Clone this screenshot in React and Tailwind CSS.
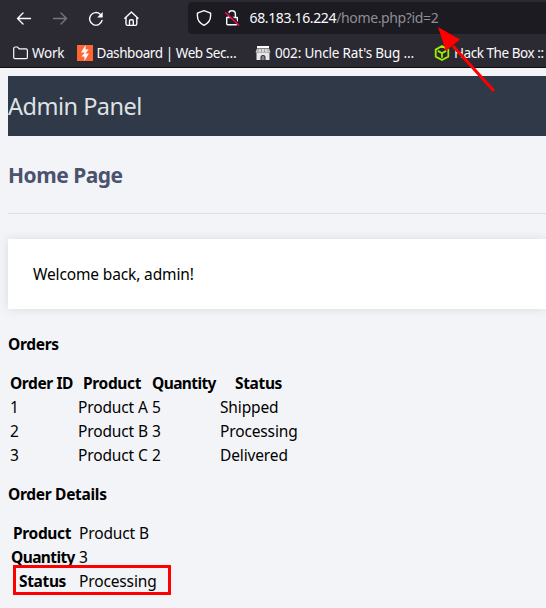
import React from "react";

const orders = [
  ["1", "Product A", "5", "Shipped"],
  ["2", "Product B", "3", "Processing"],
  ["3", "Product C", "2", "Delivered"],
];

function Toolbar() {
  return (
    <div className="flex h-[38px] items-start">
      <svg className="h-[38px] w-[188px] shrink-0" viewBox="0 0 188 38" fill="none" strokeWidth="1.4" strokeLinecap="round" strokeLinejoin="round">
        <path d="M30.5 18.5H17.5M23 13l-5.5 5.5L23 24" stroke="#fbfbfe" />
        <path d="M53.5 18.5h13M61 13l5.5 5.5L61 24" stroke="#77767e" />
        <path d="M100.2 14.2A6.3 6.3 0 1 0 102 20.5" stroke="#fbfbfe" />
        <path d="M102.7 12v5.6h-5.6z" fill="#fbfbfe" />
        <path d="M124.8 18.2l6.6-6.3 6.6 6.3M126 17.5v6.3q0 1.6 1.6 1.6h7.6q1.6 0 1.6-1.6v-6.3M129.5 25v-4q0-1.2 1.2-1.2h1.4q1.2 0 1.2 1.2v4" stroke="#fbfbfe" />
      </svg>
      <div className="mt-[2px] flex h-8 flex-1 items-center rounded-l bg-[#1c1b22]">
        <svg className="h-8 w-[61.5px] shrink-0" viewBox="0 0 61.5 32" fill="none" stroke="#fbfbfe" strokeWidth="1.4" strokeLinecap="round" strokeLinejoin="round">
          <path d="M16 8.7l6.6 2.4v2.6c0 4.4-2.6 7.6-6.6 9.6-4-2-6.6-5.2-6.6-9.6v-2.6z" />
          <path d="M40.6 14.5v-2.3a3.4 3.4 0 0 1 6.8 0v2.3M38.7 15.5h10.6v6.3q0 1-1 1h-8.6q-1 0-1-1z" />
          <path d="M38.7 9.9l13 12.6" stroke="#1c1b22" strokeWidth="1.5" />
          <path d="M37.6 10.7l13 12.4" stroke="#e20b42" strokeWidth="1.6" />
        </svg>
        <span className="whitespace-pre text-[14px] leading-8 tracking-[-0.36px] text-[#fbfbfe]">68.183.16.224<span className="text-[#8f8e95]">/home.php?id=2</span></span>
      </div>
    </div>
  );
}

function Bookmarks() {
  return (
    <div className="flex h-[30px] items-center overflow-hidden whitespace-nowrap border-b border-[#0c0c0d] text-[13.5px] leading-[30px] tracking-[-0.25px] text-[#fbfbfe]">
      <svg className="ml-[13px] h-4 w-4 shrink-0" viewBox="0 0 16 16" fill="none" stroke="#fbfbfe" strokeWidth="1.2">
        <path d="M.7 12.5v-9Q.7 2 2.2 2h2.4l1.6 1.8h6.7q1.5 0 1.5 1.5v7.2q0 1.2-1.4 1.2H2.1Q.7 13.7.7 12.5z" />
      </svg>
      <span className="ml-[3px] w-[45px] shrink-0">Work</span>
      <svg className="h-4 w-4 shrink-0" viewBox="0 0 16 16">
        <path d="M0 0h16v16H0z" fill="#ff6633" />
        <path d="M8.6 0L4 7.4h4L4.4 11.4H7.4V16L12 8.4H8.4L11.6 4.4H8.6z" fill="#fff" />
      </svg>
      <span className="ml-[3.5px] w-[158.5px] shrink-0 tracking-[-0.42px]">Dashboard | Web Sec…</span>
      <svg className="h-4 w-4 shrink-0" viewBox="0 0 16 16">
        <path d="M2 1h12v2H2z" fill="#fff" />
        <path d="M2 3.5h12l1.5 4H.5z" fill="#d8d8d8" />
        <path d="M3.5 3.5l-1 4M6.5 3.5v4M9.5 3.5v4M12.5 3.5l1 4" stroke="#8a898e" strokeWidth="0.7" />
        <path d="M1.5 7.5h13V15h-4v-3q0-2-2.5-2t-2.5 2v3h-4z" fill="#e8e8e8" />
        <path d="M6.5 15v-3q0-1 1.5-1t1.5 1v3z" fill="#85848a" />
      </svg>
      <span className="ml-1 w-[159px] shrink-0 tracking-[-0.18px]">002: Uncle Rat's Bug …</span>
      <svg className="h-4 w-4 shrink-0" viewBox="0 0 16 16" fill="none" stroke="#9fef00" strokeWidth="1.8" strokeLinejoin="round">
        <path d="M8 1l6.3 3.6v7L8 15l-6.3-3.4v-7zM3.9 5.9L8 8.2l4.1-2.3M8 8.2v4.5" />
      </svg>
      <span className="ml-1 shrink-0 tracking-[-0.45px]">Hack The Box ::</span>
    </div>
  );
}

export default function App() {
  return (
    <div className="relative h-[608px] w-[546px] overflow-hidden bg-[#f3f4f8] font-['Noto_Sans',sans-serif] text-[15.5px] leading-6 tracking-[-0.14px] text-black">
      <div className="bg-[#2b2a33]">
        <Toolbar />
        <Bookmarks />
      </div>
      <main className="pl-2 pt-2">
        <header className="h-[60px] bg-[#2f3947] text-[23.5px] leading-[60px] tracking-[-0.5px] text-[#dfe1e4]">Admin Panel</header>
        <h1 className="mt-6 h-[30px] text-[21px] font-bold leading-[30px] tracking-[-0.5px] text-[#4a536e]">Home Page</h1>
        <hr className="mt-[23px] border-t border-[#dcdee2]" />
        <div className="mt-[25px] h-[70px] bg-white pl-[25px] pt-[23px] shadow-[0_0_10px_rgba(0,0,0,0.1)]">Welcome back, admin!</div>
        <h2 className="mt-[23px] font-bold tracking-[-0.3px]">Orders</h2>
        <div className="mt-[15px] grid w-[292px] grid-cols-[70px_74px_68px_80px] whitespace-nowrap">
          <b className="pl-[2px] tracking-[-0.4px]">Order ID</b>
          <b className="pl-[5px] tracking-[-0.35px]">Product</b>
          <b className="tracking-[-0.6px]">Quantity</b>
          <b className="pl-[15px] tracking-[-0.35px]">Status</b>
          {orders.map((row) => (
            <React.Fragment key={row[0]}>
              <span className="pl-[2px]">{row[0]}</span>
              <span>{row[1]}</span>
              <span>{row[2]}</span>
              <span>{row[3]}</span>
            </React.Fragment>
          ))}
        </div>
        <h2 className="mt-[15px] font-bold tracking-[-0.3px]">Order Details</h2>
        <div className="mt-[15px] grid grid-cols-[71px_100px] whitespace-nowrap">
          <b className="pl-[5px] tracking-[-0.35px]">Product</b><span>Product B</span>
          <b className="pl-[3px] tracking-[-0.6px]">Quantity</b><span>3</span>
          <b className="pl-[11px] tracking-[-0.35px]">Status</b><span>Processing</span>
        </div>
      </main>
      <div className="absolute left-[13px] top-[565px] h-[30px] w-[158px] border-[3px] border-[#ff0000]" />
      <svg className="pointer-events-none absolute left-0 top-0 h-full w-full" viewBox="0 0 546 608">
        <path d="M494 91L453 46" stroke="#f00" strokeWidth="3" />
        <path d="M438 27l22 12.5L446 51z" fill="#f00" />
      </svg>
    </div>
  );
}
